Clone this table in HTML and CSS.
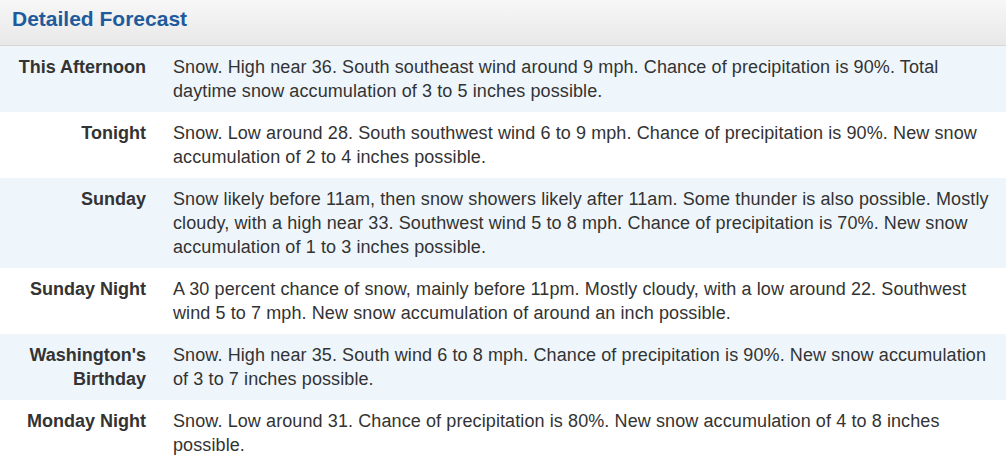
FILE: index.html
```html
<!DOCTYPE html>
<html>
<head>
<meta charset="utf-8">
<link rel="stylesheet" href="styles.css">
</head>
<body>
<div class="panel">
  <div class="panel-heading"><h2 class="panel-title">Detailed Forecast</h2></div>
  <div class="forecast">
    <div class="row alt"><div class="label">This Afternoon</div><div class="text">Snow. High near 36. South southeast wind around 9 mph. Chance of precipitation is 90%. Total daytime snow accumulation of 3 to 5 inches possible.</div></div>
    <div class="row"><div class="label">Tonight</div><div class="text">Snow. Low around 28. South southwest wind 6 to 9 mph. Chance of precipitation is 90%. New snow accumulation of 2 to 4 inches possible.</div></div>
    <div class="row alt"><div class="label">Sunday</div><div class="text">Snow likely before 11am, then snow showers likely after 11am. Some thunder is also possible. Mostly cloudy, with a high near 33. Southwest wind 5 to 8 mph. Chance of precipitation is 70%. New snow accumulation of 1 to 3 inches possible.</div></div>
    <div class="row"><div class="label">Sunday Night</div><div class="text">A 30 percent chance of snow, mainly before 11pm. Mostly cloudy, with a low around 22. Southwest wind 5 to 7 mph. New snow accumulation of around an inch possible.</div></div>
    <div class="row alt"><div class="label">Washington's Birthday</div><div class="text">Snow. High near 35. South wind 6 to 8 mph. Chance of precipitation is 90%. New snow accumulation of 3 to 7 inches possible.</div></div>
    <div class="row"><div class="label">Monday Night</div><div class="text">Snow. Low around 31. Chance of precipitation is 80%. New snow accumulation of 4 to 8 inches possible.</div></div>
  </div>
</div>
</body>
</html>
```
FILE: styles.css
```css
html, body {
  margin: 0;
  padding: 0;
  background: #fff;
}
body {
  font-family: "Liberation Sans", Arial, sans-serif;
  color: #333;
  width: 1006px;
  height: 458px;
  overflow: hidden;
}
.panel-heading {
  height: 45px;
  background: linear-gradient(to bottom, #f7f7f7, #e8e8e8);
  border-bottom: 1px solid #d6d6d6;
  display: flex;
  align-items: center;
  padding-left: 12px;
}
.panel-title {
  margin: 0;
  font-size: 21px;
  font-weight: bold;
  color: #1f5b9c;
  line-height: 1;
  position: relative;
  top: -4px;
}
.row {
  display: grid;
  grid-template-columns: 146px 828px;
  column-gap: 27px;
  padding: 9px 0;
  font-size: 18px;
  line-height: 24px;
}
.row.alt {
  background: #eef6fc;
}
.label {
  font-weight: bold;
  text-align: right;
}
.text {
  letter-spacing: 0.1px;
}
```
